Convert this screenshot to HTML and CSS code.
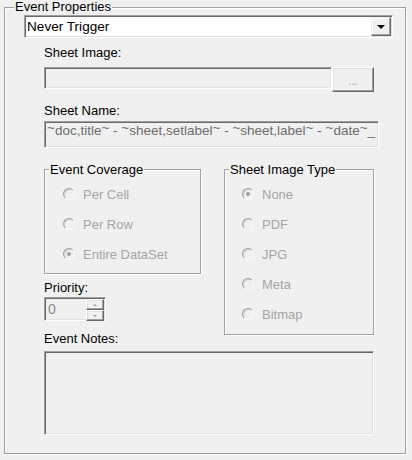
FILE: index.html
```html
<!DOCTYPE html>
<html>
<head>
<meta charset="utf-8">
<link rel="stylesheet" href="styles.css">
</head>
<body>
<div class="frame">
  <div class="legend">Event Properties</div>
  <div class="combo">
    <span class="combo-text">Never Trigger</span>
    <span class="combo-btn"><span class="tri"></span></span>
  </div>
  <div class="content">
    <div class="label l-image">Sheet Image:</div>
    <div class="image-row">
      <div class="sunken edit-image"></div>
      <div class="raised btn-browse">...</div>
    </div>
    <div class="label l-name">Sheet Name:</div>
    <div class="sunken edit-name"><span class="tl">~</span>doc,title<span class="tl">~</span> - <span class="tl">~</span>sheet,setlabel<span class="tl">~</span> - <span class="tl">~</span>sheet,label<span class="tl">~</span> - <span class="tl">~</span>date<span class="tl">~</span>_</div>
    <div class="groups">
      <div class="left-col">
        <div class="group group-cov">
          <div class="legend legend-sm">Event Coverage</div>
          <div class="radio-row"><span class="radio"></span><span class="rlabel">Per Cell</span></div>
          <div class="radio-row"><span class="radio"></span><span class="rlabel">Per Row</span></div>
          <div class="radio-row"><span class="radio checked"></span><span class="rlabel">Entire DataSet</span></div>
        </div>
        <div class="label l-priority">Priority:</div>
        <div class="sunken spinner">
          <span class="spin-text">0</span>
          <span class="spin-btns">
            <span class="raised spin-btn"><span class="sarrow up"></span></span>
            <span class="raised spin-btn"><span class="sarrow down"></span></span>
          </span>
        </div>
        <div class="label l-notes">Event Notes:</div>
      </div>
      <div class="group group-type">
        <div class="legend legend-sm">Sheet Image Type</div>
        <div class="radio-row"><span class="radio checked"></span><span class="rlabel">None</span></div>
        <div class="radio-row"><span class="radio"></span><span class="rlabel">PDF</span></div>
        <div class="radio-row"><span class="radio"></span><span class="rlabel">JPG</span></div>
        <div class="radio-row"><span class="radio"></span><span class="rlabel">Meta</span></div>
        <div class="radio-row"><span class="radio"></span><span class="rlabel">Bitmap</span></div>
      </div>
    </div>
    <div class="sunken notes"></div>
  </div>
</div>
</body>
</html>
```
FILE: styles.css
```css
* { box-sizing: border-box; }
html, body { margin: 0; padding: 0; }
body {
  width: 412px;
  height: 460px;
  overflow: hidden;
  background: #f0f0f0;
  font-family: "Liberation Sans", Arial, sans-serif;
  font-size: 13px;
  line-height: 15px;
  color: #000;
}
.frame {
  position: relative;
  margin: 7px 6px 0 4px;
  height: 447px;
  border: 1px solid #a0a0a0;
  box-shadow: inset 1px 1px 0 #fff, 1px 1px 0 #fff;
  padding: 7px 0 0 19px;
}
.legend {
  position: absolute;
  top: -9px;
  left: 9px;
  padding: 0 1px;
  background: #f0f0f0;
  white-space: nowrap;
}
.legend-sm { top: -8px; left: 4px; }
.sunken {
  border: 1px solid;
  border-color: #a0a0a0 #fff #fff #a0a0a0;
  box-shadow: inset 1px 1px 0 #696969, inset -1px -1px 0 #e3e3e3;
}
.raised {
  border: 1px solid;
  border-color: #fff #696969 #696969 #fff;
  box-shadow: inset -1px -1px 0 #a0a0a0, inset 1px 1px 0 #e3e3e3;
  background: #f0f0f0;
}
.combo {
  width: 369px;
  height: 23px;
  background: #fff;
  border: 1px solid;
  border-color: #a0a0a0 #fff #fff #a0a0a0;
  box-shadow: inset 1px 1px 0 #696969, inset -1px -1px 0 #e3e3e3;
  display: flex;
  align-items: center;
  justify-content: space-between;
  padding: 0 1px 0 2px;
}
.combo-text { font-size: 13.6px; line-height: 16px; }
.combo-btn {
  width: 20px;
  height: 19px;
  border: 1px solid;
  border-color: #f0f0f0 #696969 #696969 #f0f0f0;
  box-shadow: inset -1px -1px 0 #a0a0a0, inset 1px 1px 0 #fff;
  background: #f0f0f0;
  display: flex;
  align-items: center;
  justify-content: center;
}
.tri {
  width: 0;
  height: 0;
  border-left: 4px solid transparent;
  border-right: 4px solid transparent;
  border-top: 4px solid #000;
  margin-top: 1px;
}
.content { padding-left: 20px; }
.label { height: 15px; white-space: nowrap; }
.l-image { margin-top: 7px; }
.image-row {
  margin-top: 7px;
  display: flex;
  align-items: flex-start;
}
.edit-image { width: 288px; height: 22px; }
.btn-browse {
  width: 42px;
  height: 25px;
  font-size: 11px;
  color: #a0a0a0;
  display: flex;
  align-items: center;
  justify-content: center;
  padding-top: 3px;
}
.l-name { margin-top: 11px; }
.edit-name {
  margin-top: 3px;
  width: 335px;
  height: 27px;
  padding: 2px 0 0 2px;
  font-size: 13.5px;
  line-height: 14px;
  color: #6d6d6d;
  white-space: nowrap;
  overflow: hidden;
}
.tl {
  position: relative;
  top: -3px;
}
.groups {
  margin-top: 21px;
  display: grid;
  grid-template-columns: 157px 150px;
  column-gap: 23px;
  align-items: start;
}
.group {
  position: relative;
  border: 1px solid #a0a0a0;
  box-shadow: inset 1px 1px 0 #fff, 1px 1px 0 #fff;
  padding-top: 9px;
}
.group-cov { height: 105px; padding-left: 18px; }
.group-type { height: 166px; padding-left: 17px; }
.radio-row {
  height: 30px;
  display: flex;
  align-items: center;
}
.radio {
  flex: none;
  position: relative;
  width: 12px;
  height: 12px;
  border-radius: 50%;
  border: 1px solid;
  border-color: #a0a0a0 #fafafa #fafafa #a0a0a0;
  box-shadow: inset 1px 1px 0 #cfcfcf;
  background: #f0f0f0;
}
.radio.checked::after {
  content: "";
  position: absolute;
  left: 3px;
  top: 3px;
  width: 4px;
  height: 4px;
  border-radius: 50%;
  background: #a0a0a0;
}
.rlabel {
  margin-left: 8px;
  color: #a5a5a5;
  white-space: nowrap;
}
.l-priority { margin-top: 6px; }
.spinner {
  margin-top: 2px;
  width: 62px;
  height: 24px;
  display: flex;
  align-items: flex-start;
  justify-content: space-between;
  padding: 1px 1px 1px 3px;
}
.spin-text {
  font-size: 14px;
  line-height: 20px;
  color: #8a8a8a;
}
.spin-btns {
  display: flex;
  flex-direction: column;
  width: 18px;
}
.spin-btn {
  height: 11px;
  display: flex;
  align-items: center;
  justify-content: center;
}
.sarrow {
  width: 0;
  height: 0;
  border-left: 2px solid transparent;
  border-right: 2px solid transparent;
}
.sarrow.up { border-bottom: 2px solid #a0a0a0; }
.sarrow.down { border-top: 2px solid #a0a0a0; }
.l-notes { margin-top: 10px; }
.notes {
  margin-top: 5px;
  width: 330px;
  height: 84px;
}
```
